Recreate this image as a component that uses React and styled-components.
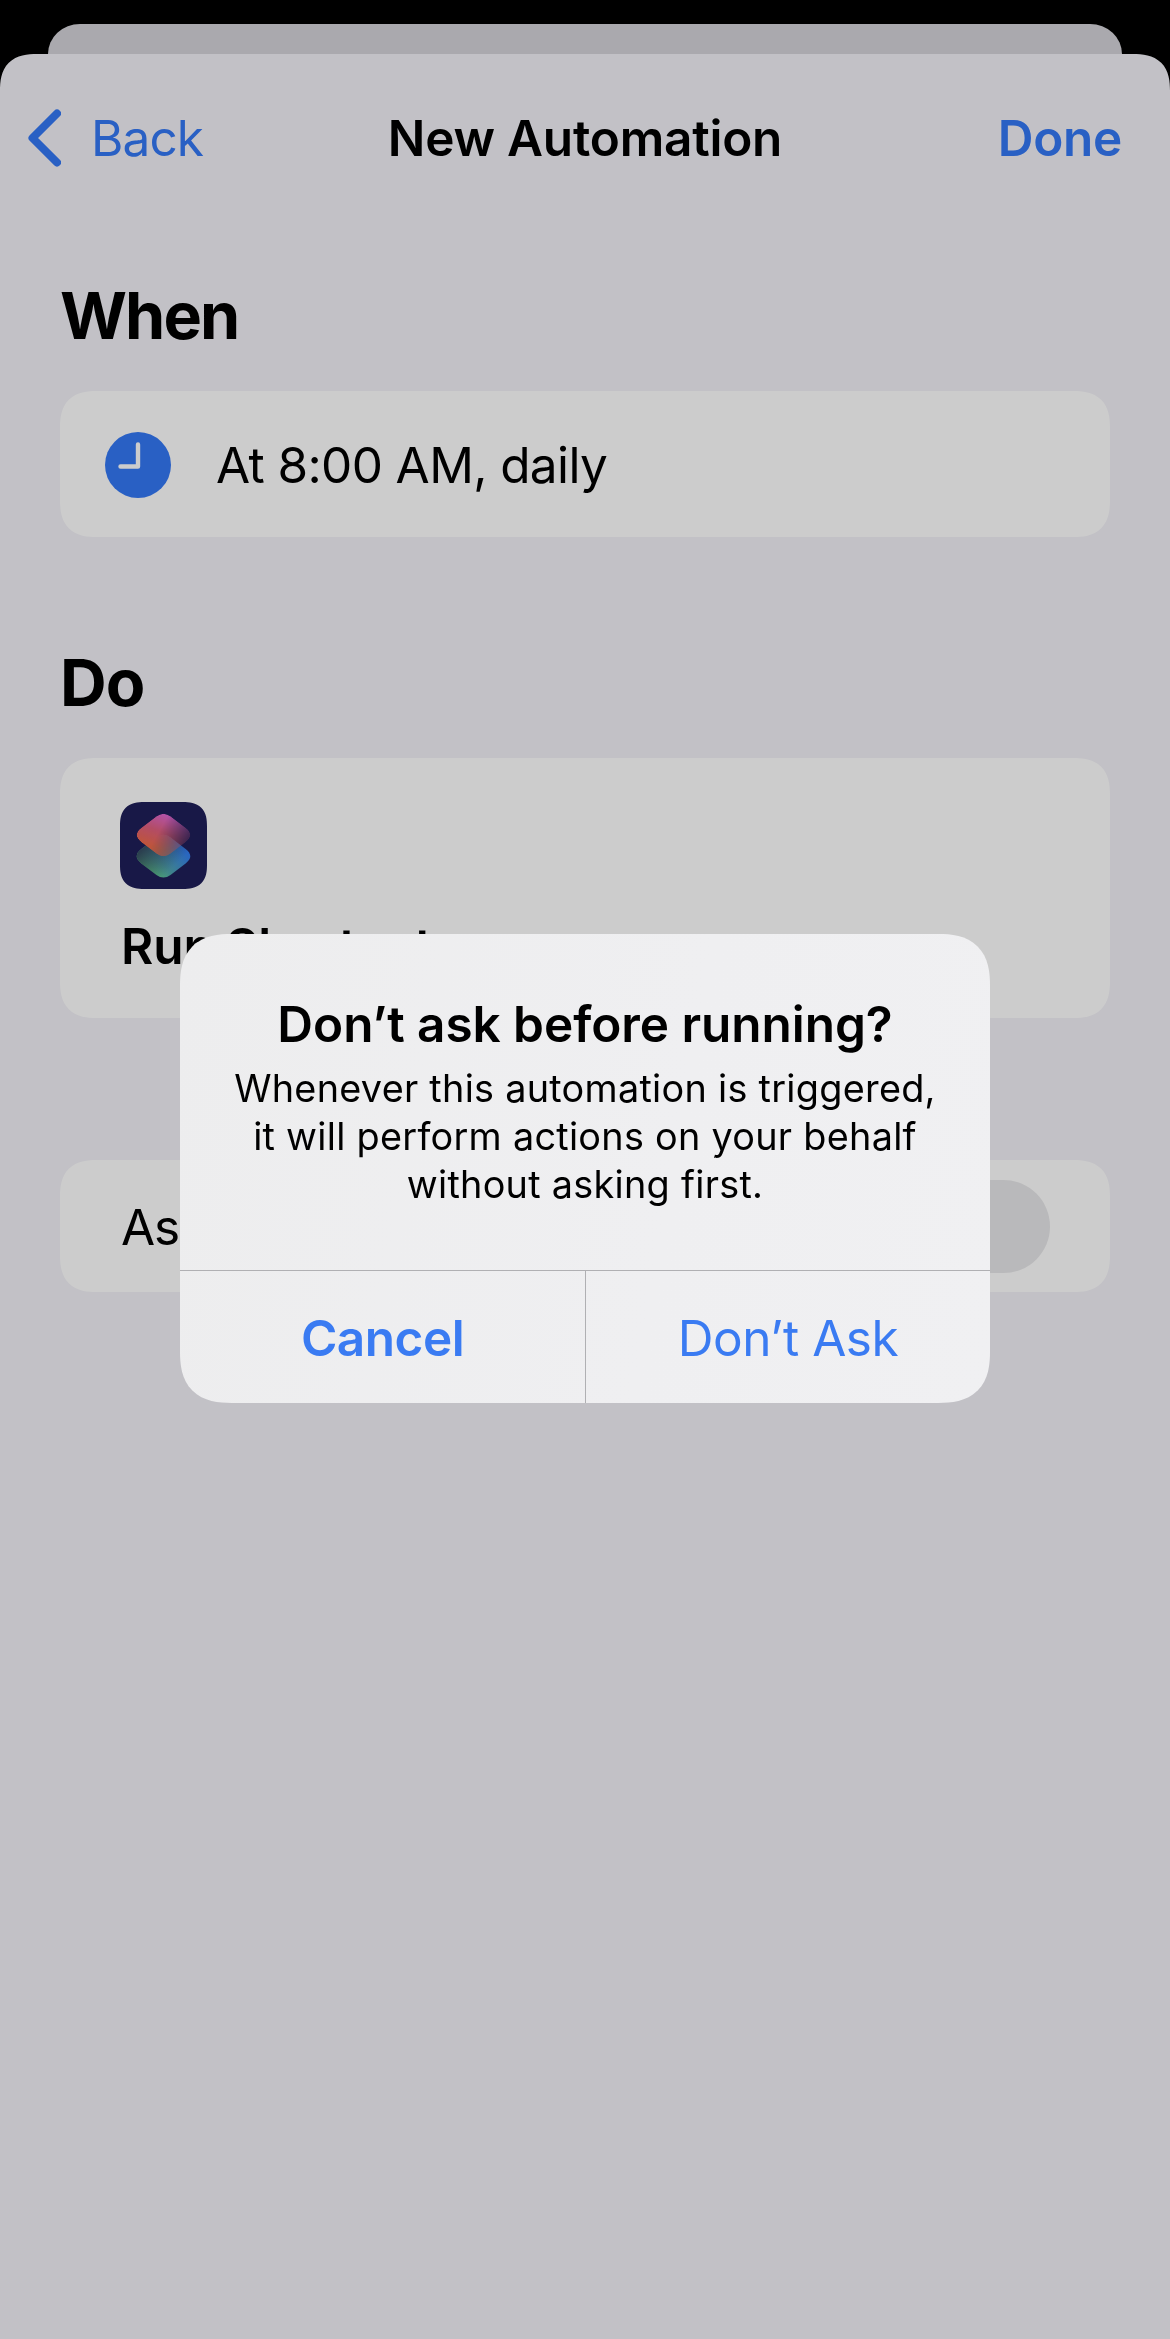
import React from "react";
import styled, { createGlobalStyle } from "styled-components";

const GlobalStyle = createGlobalStyle`
  *, *::before, *::after { box-sizing: border-box; }
  html, body, #root { height: 100%; }
  body {
    margin: 0;
    background: #000;
    color: #000;
    font-family: Inter, "Liberation Sans", sans-serif;
    font-size: 49.5px;
    line-height: 60px;
    overflow: hidden;
  }
  button {
    margin: 0;
    padding: 0;
    border: 0;
    background: none;
    font: inherit;
  }
`;

const Screen = styled.div`
  display: flex;
  flex-direction: column;
  height: 2339px;
  padding-top: 24px;
  background: #000;
`;

const PreviousSheet = styled.div`
  flex: none;
  height: 30px;
  margin: 0 48px;
  background: #d5d4da;
  border-top-left-radius: 32px 30px;
  border-top-right-radius: 32px 30px;
`;

const Sheet = styled.main`
  flex: 1;
  background: #f3f2f8;
  border-radius: 37px 37px 0 0;
  corner-shape: superellipse(1.35);
`;

const NavBar = styled.header`
  display: grid;
  grid-template-columns: 1fr auto 1fr;
  align-items: center;
  height: 168px;
  padding: 0 48px;
`;

const BackButton = styled.button`
  display: flex;
  align-items: center;
  gap: 30px;
  margin-left: -20px;
  color: #3478f6;
  letter-spacing: -0.9px;
`;

const NavTitle = styled.h1`
  margin: 0;
  font-size: 49.5px;
  font-weight: 600;
  line-height: 60px;
  letter-spacing: -0.22px;
`;

const DoneButton = styled.button`
  justify-self: end;
  color: #3478f6;
  font-weight: 600;
  letter-spacing: -0.29px;
`;

const Section = styled.section`
  padding: ${(p) => p.$top}px 60px 0;
`;

const SectionTitle = styled.h2`
  margin: 0 0 35px;
  font-size: 64.6px;
  font-weight: 700;
  line-height: 80px;
  letter-spacing: ${(p) => p.$tracking}px;
`;

const Card = styled.div`
  background: #fff;
  border-radius: 37px;
  corner-shape: superellipse(1.35);
`;

const TriggerCard = styled(Card)`
  display: flex;
  align-items: center;
  gap: 45px;
  height: 146px;
  padding: 2px 45px 0;
  letter-spacing: -0.62px;
`;

const ActionCard = styled(Card)`
  display: flex;
  flex-direction: column;
  align-items: flex-start;
  gap: 27px;
  height: 260px;
  padding: 44px 60px 0;
`;

const ActionName = styled.div`
  padding-left: 1px;
  font-weight: 600;
  letter-spacing: -0.08px;
`;

const AppIcon = styled.div`
  display: flex;
  width: 87px;
  height: 87px;
  background: #1f1f59;
  border-radius: 24px;
  corner-shape: superellipse(1.35);
`;

const ToggleCard = styled(Card)`
  display: flex;
  align-items: center;
  justify-content: space-between;
  height: 132px;
  padding: 1px 60px 0 61px;
  letter-spacing: -1.2px;
`;

const Toggle = styled.div`
  width: 153px;
  height: 93px;
  border-radius: 47px;
  background: #e8e8ea;
`;

const Backdrop = styled.div`
  position: fixed;
  inset: 0;
  display: flex;
  align-items: center;
  justify-content: center;
  padding-bottom: 2px;
  background: rgba(0, 0, 0, 0.2);
`;

const Alert = styled.div`
  width: 810px;
  height: 469px;
  display: flex;
  flex-direction: column;
  overflow: hidden;
  background: linear-gradient(100deg, #ededee, #efeff1 60%, #f0f0f2);
  border-radius: 52px;
  corner-shape: superellipse(1.35);
`;

const AlertBody = styled.div`
  flex: 1;
  padding-top: 60px;
  text-align: center;
`;

const AlertTitle = styled.h3`
  margin: 0 0 10px;
  font-size: 49.5px;
  font-weight: 600;
  letter-spacing: -0.05px;
`;

const AlertMessage = styled.p`
  margin: 0 auto;
  width: 716px;
  font-size: 37.8px;
  line-height: 48px;
  letter-spacing: 0.28px;
`;

const AlertActions = styled.div`
  display: grid;
  grid-template-columns: 1fr 1fr;
  height: 133px;
  border-top: 1px solid #b0b0b3;
`;

const AlertButton = styled.button`
  padding-top: 2px;
  color: #3a7bf2;
  font-weight: ${(p) => (p.$strong ? 600 : 400)};
  letter-spacing: -0.5px;

  & + & {
    border-left: 1px solid #b0b0b3;
  }
`;

function Chevron() {
  return (
    <svg width="33" height="58" viewBox="0 0 33 58" fill="none" stroke="currentColor" strokeWidth="8" strokeLinecap="round" strokeLinejoin="round">
      <path d="M29 4.5 4.5 29 29 53.5" />
    </svg>
  );
}

function Clock() {
  return (
    <svg width="66" height="66" viewBox="0 0 66 66" fill="none">
      <circle cx="33" cy="33" r="33" fill="#3478f6" />
      <path d="M33 12.5V34.5H15.5" stroke="#fff" strokeWidth="4.4" strokeLinecap="round" strokeLinejoin="round" />
    </svg>
  );
}

const TILE =
  "M-7 -18.7Q0 -24 7 -18.7L22.1 -7.2Q31.5 0 22.1 7.2L7 18.7Q0 24 -7 18.7L-22.1 7.2Q-31.5 0 -22.1 -7.2Z";

function ShortcutsGlyph() {
  return (
    <svg width="87" height="87" viewBox="0 0 87 87">
      <defs>
        <linearGradient id="lowerFill" gradientUnits="userSpaceOnUse" x1="-10" y1="20" x2="20" y2="-6">
          <stop offset="0" stopColor="#62cf8c" />
          <stop offset="0.4" stopColor="#4fa3b0" />
          <stop offset="1" stopColor="#3480f0" />
        </linearGradient>
        <linearGradient id="lowerShade" gradientUnits="userSpaceOnUse" x1="-20" y1="-9" x2="4" y2="16">
          <stop offset="0" stopColor="#33465f" stopOpacity="0.95" />
          <stop offset="1" stopColor="#33465f" stopOpacity="0" />
        </linearGradient>
        <linearGradient id="upperFill" gradientUnits="userSpaceOnUse" x1="2" y1="-20" x2="-9" y2="12">
          <stop offset="0" stopColor="#e067cf" />
          <stop offset="0.5" stopColor="#e0607f" />
          <stop offset="1" stopColor="#ee6a4c" />
        </linearGradient>
        <linearGradient id="upperFade" gradientUnits="userSpaceOnUse" x1="-4" y1="-4" x2="21" y2="10">
          <stop offset="0" stopColor="#fff" />
          <stop offset="1" stopColor="#fff" stopOpacity="0.25" />
        </linearGradient>
        <mask id="upperMask" maskUnits="userSpaceOnUse" x="-32" y="-25" width="64" height="50">
          <path d={TILE} fill="url(#upperFade)" />
        </mask>
      </defs>
      <g transform="translate(43.5 54.2)">
        <path d={TILE} fill="url(#lowerFill)" />
        <path d={TILE} fill="url(#lowerShade)" />
      </g>
      <g transform="translate(43.5 33)">
        <path d={TILE} fill="url(#upperFill)" mask="url(#upperMask)" />
      </g>
    </svg>
  );
}

export default function App() {
  return (
    <>
      <GlobalStyle />
      <Screen>
        <PreviousSheet />
        <Sheet>
          <NavBar>
            <BackButton>
              <Chevron />
              Back
            </BackButton>
            <NavTitle>New Automation</NavTitle>
            <DoneButton>Done</DoneButton>
          </NavBar>
          <Section $top={54}>
            <SectionTitle $tracking={-1.9}>When</SectionTitle>
            <TriggerCard>
              <Clock />
              <span>At 8:00 AM, daily</span>
            </TriggerCard>
          </Section>
          <Section $top={106}>
            <SectionTitle $tracking={-1}>Do</SectionTitle>
            <ActionCard>
              <AppIcon>
                <ShortcutsGlyph />
              </AppIcon>
              <ActionName>Run Shortcut</ActionName>
            </ActionCard>
          </Section>
          <Section $top={142}>
            <ToggleCard>
              <span>Ask</span>
              <Toggle />
            </ToggleCard>
          </Section>
        </Sheet>
      </Screen>
      <Backdrop>
        <Alert role="alertdialog">
          <AlertBody>
            <AlertTitle>Don’t ask before running?</AlertTitle>
            <AlertMessage>
              Whenever this automation is triggered, it will perform actions on your behalf without asking first.
            </AlertMessage>
          </AlertBody>
          <AlertActions>
            <AlertButton $strong>Cancel</AlertButton>
            <AlertButton>Don’t Ask</AlertButton>
          </AlertActions>
        </Alert>
      </Backdrop>
    </>
  );
}
